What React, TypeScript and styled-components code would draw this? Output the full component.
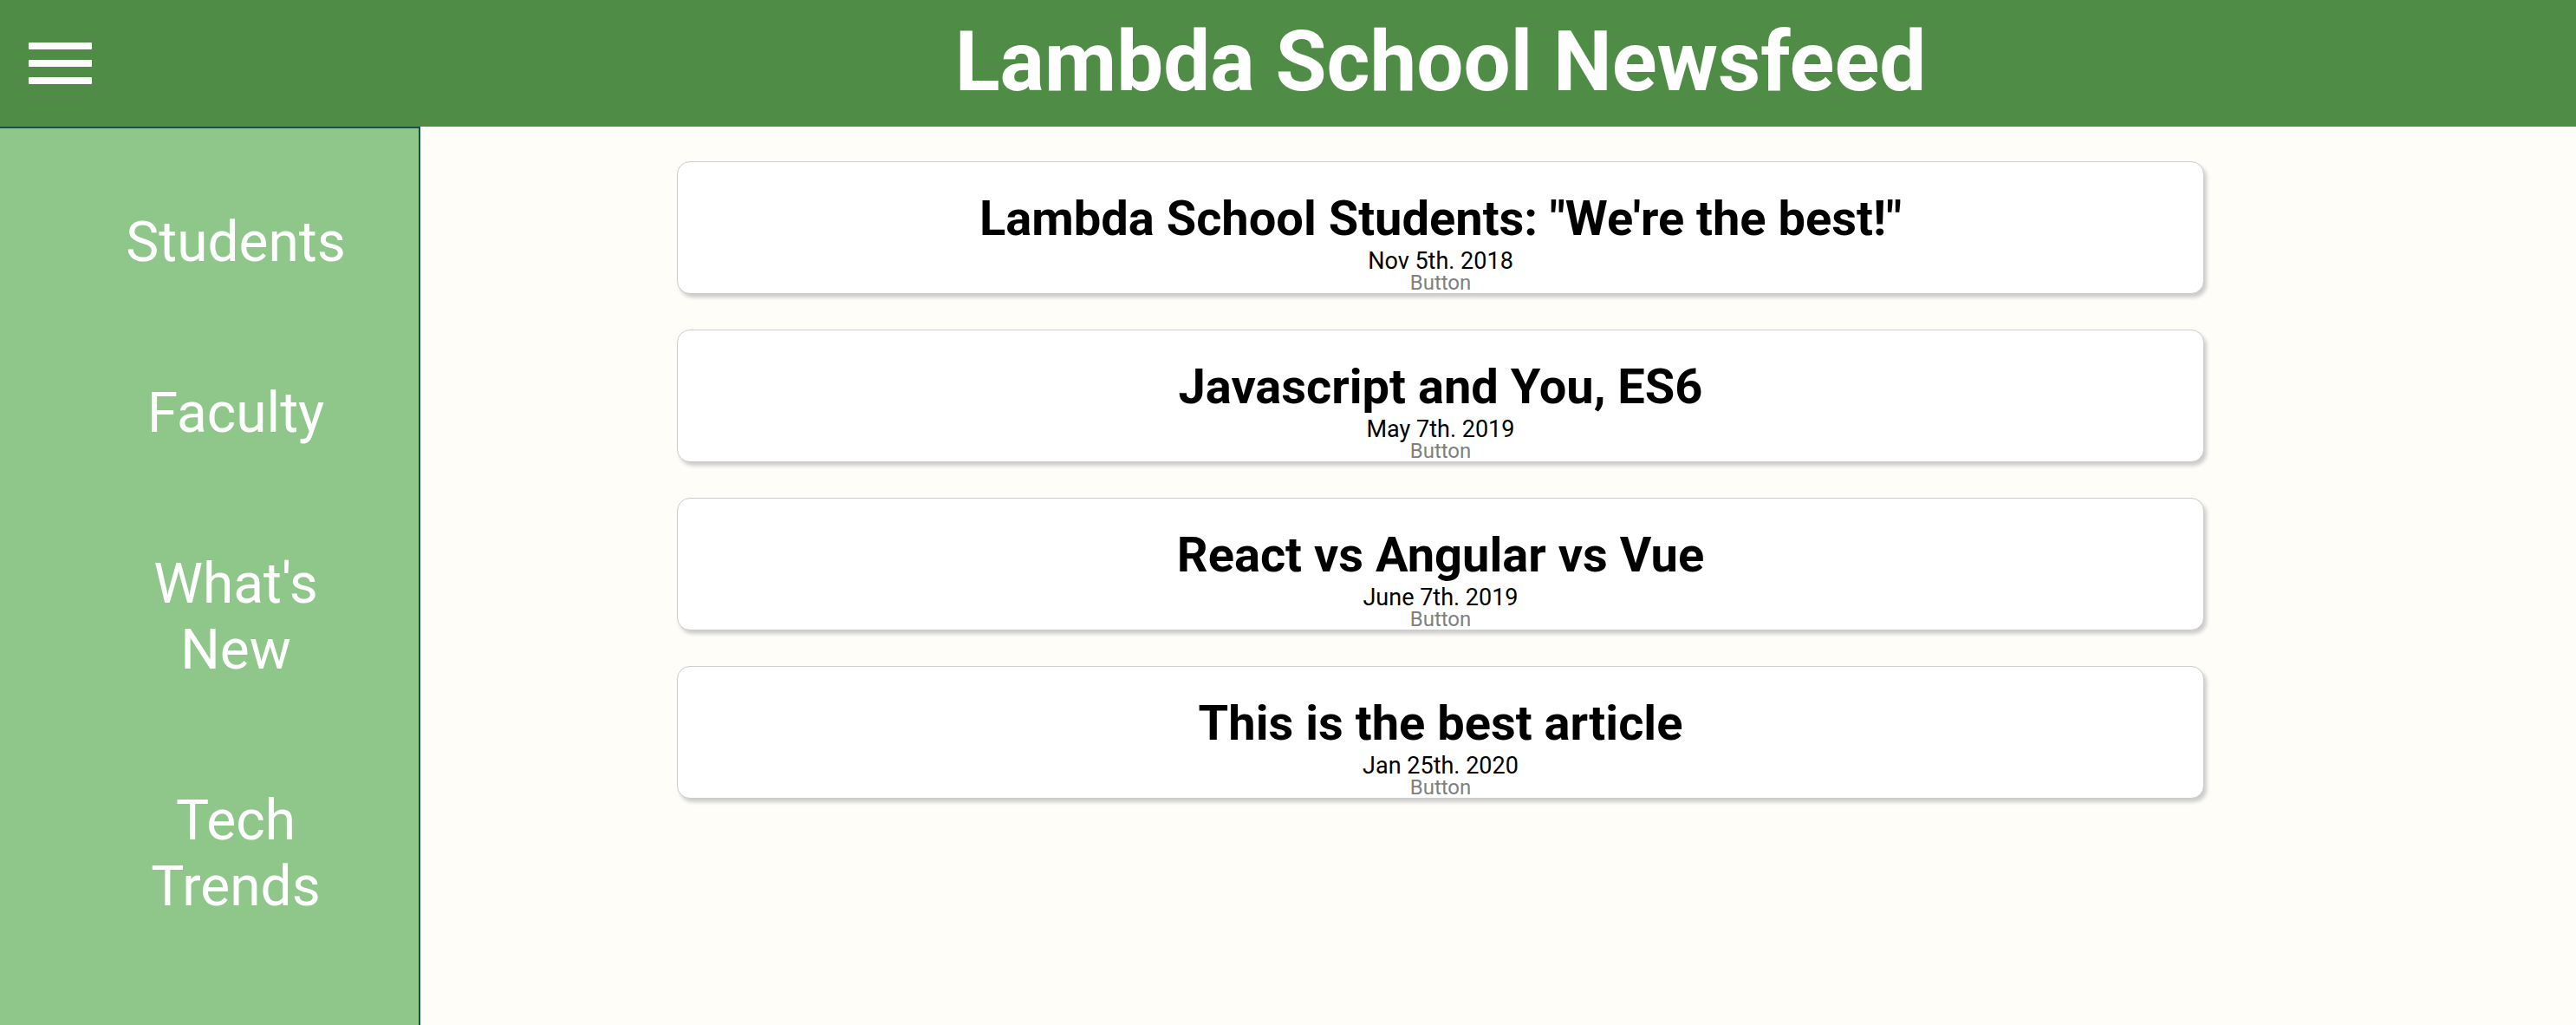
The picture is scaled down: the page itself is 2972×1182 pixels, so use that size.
import React from "react";
import styled, { createGlobalStyle } from "styled-components";

const GlobalStyle = createGlobalStyle`
  html, body {
    margin: 0;
    padding: 0;
    background: #fffdf7;
  }
  body {
    font-family: Roboto, "Liberation Sans", Arial, sans-serif;
  }
  * { box-sizing: border-box; }
`;

const Page = styled.div`
  display: flex;
  flex-direction: column;
  min-height: 100vh;
  background: #fffdf7;
`;

const Header = styled.header`
  display: flex;
  align-items: center;
  height: 146px;
  background: #4f8d47;
`;

const MenuSlot = styled.div`
  width: 485px;
  display: flex;
  align-items: center;
  padding-left: 33px;
`;

const MenuButton = styled.button`
  border: none;
  background: transparent;
  padding: 0;
  display: flex;
  cursor: pointer;
`;

const Title = styled.h1`
  flex: 1;
  margin: 0;
  padding-right: 133px;
  padding-bottom: 4px;
  text-align: center;
  color: #ffffff;
  font-size: 96px;
  font-weight: 700;
  line-height: 1.17;
`;

const Body = styled.div`
  flex: 1;
  display: flex;
`;

const Sidebar = styled.nav`
  width: 485px;
  flex-shrink: 0;
  background: #8fc68a;
  border-top: 2px solid #1d4f46;
  border-right: 2px solid #1d4f46;
  display: flex;
  flex-direction: column;
  align-items: center;
  gap: 121px;
  padding: 94px 0 0 61px;
`;

const NavLink = styled.a`
  display: block;
  color: #ffffff;
  text-align: center;
  font-size: 64px;
  line-height: 76px;
  text-decoration: none;
  width: 270px;
`;

const Main = styled.main`
  flex: 1;
  display: flex;
  flex-direction: column;
  align-items: center;
  gap: 41px;
  padding: 40px 133px 0 0;
`;

const Card = styled.article`
  width: 1762px;
  height: 153px;
  background: #ffffff;
  border: 1px solid #cccccc;
  border-radius: 15px;
  box-shadow: 3px 4px 4px #cccccc;
  display: flex;
  flex-direction: column;
  align-items: center;
  padding-top: 32px;
`;

const CardTitle = styled.h2`
  margin: 0;
  font-size: 56px;
  font-weight: 700;
  line-height: 67px;
  color: #000000;
`;

const CardDate = styled.p`
  margin: 0;
  font-size: 27px;
  line-height: 31px;
  color: #000000;
`;

const CardButton = styled.button`
  border: none;
  background: transparent;
  padding: 0;
  font-family: inherit;
  font-size: 24px;
  line-height: 18px;
  color: #808080;
`;

const Hamburger = () => (
  <svg width="73" height="48" viewBox="0 0 73 48" aria-hidden="true">
    <rect x="0" y="0" width="73" height="8" rx="1" fill="#ffffff" />
    <rect x="0" y="20" width="73" height="8" rx="1" fill="#ffffff" />
    <rect x="0" y="40" width="73" height="8" rx="1" fill="#ffffff" />
  </svg>
);

const navItems = ["Students", "Faculty", "What's New", "Tech Trends"];

const articles = [
  { title: 'Lambda School Students: "We\'re the best!"', date: "Nov 5th. 2018" },
  { title: "Javascript and You, ES6", date: "May 7th. 2019" },
  { title: "React vs Angular vs Vue", date: "June 7th. 2019" },
  { title: "This is the best article", date: "Jan 25th. 2020" },
];

export default function App() {
  return (
    <>
      <GlobalStyle />
      <Page>
        <Header>
          <MenuSlot>
            <MenuButton aria-label="Menu">
              <Hamburger />
            </MenuButton>
          </MenuSlot>
          <Title>Lambda School Newsfeed</Title>
        </Header>
        <Body>
          <Sidebar>
            {navItems.map((item) => (
              <NavLink key={item} href="#">
                {item}
              </NavLink>
            ))}
          </Sidebar>
          <Main>
            {articles.map((a) => (
              <Card key={a.title}>
                <CardTitle>{a.title}</CardTitle>
                <CardDate>{a.date}</CardDate>
                <CardButton>Button</CardButton>
              </Card>
            ))}
          </Main>
        </Body>
      </Page>
    </>
  );
}
